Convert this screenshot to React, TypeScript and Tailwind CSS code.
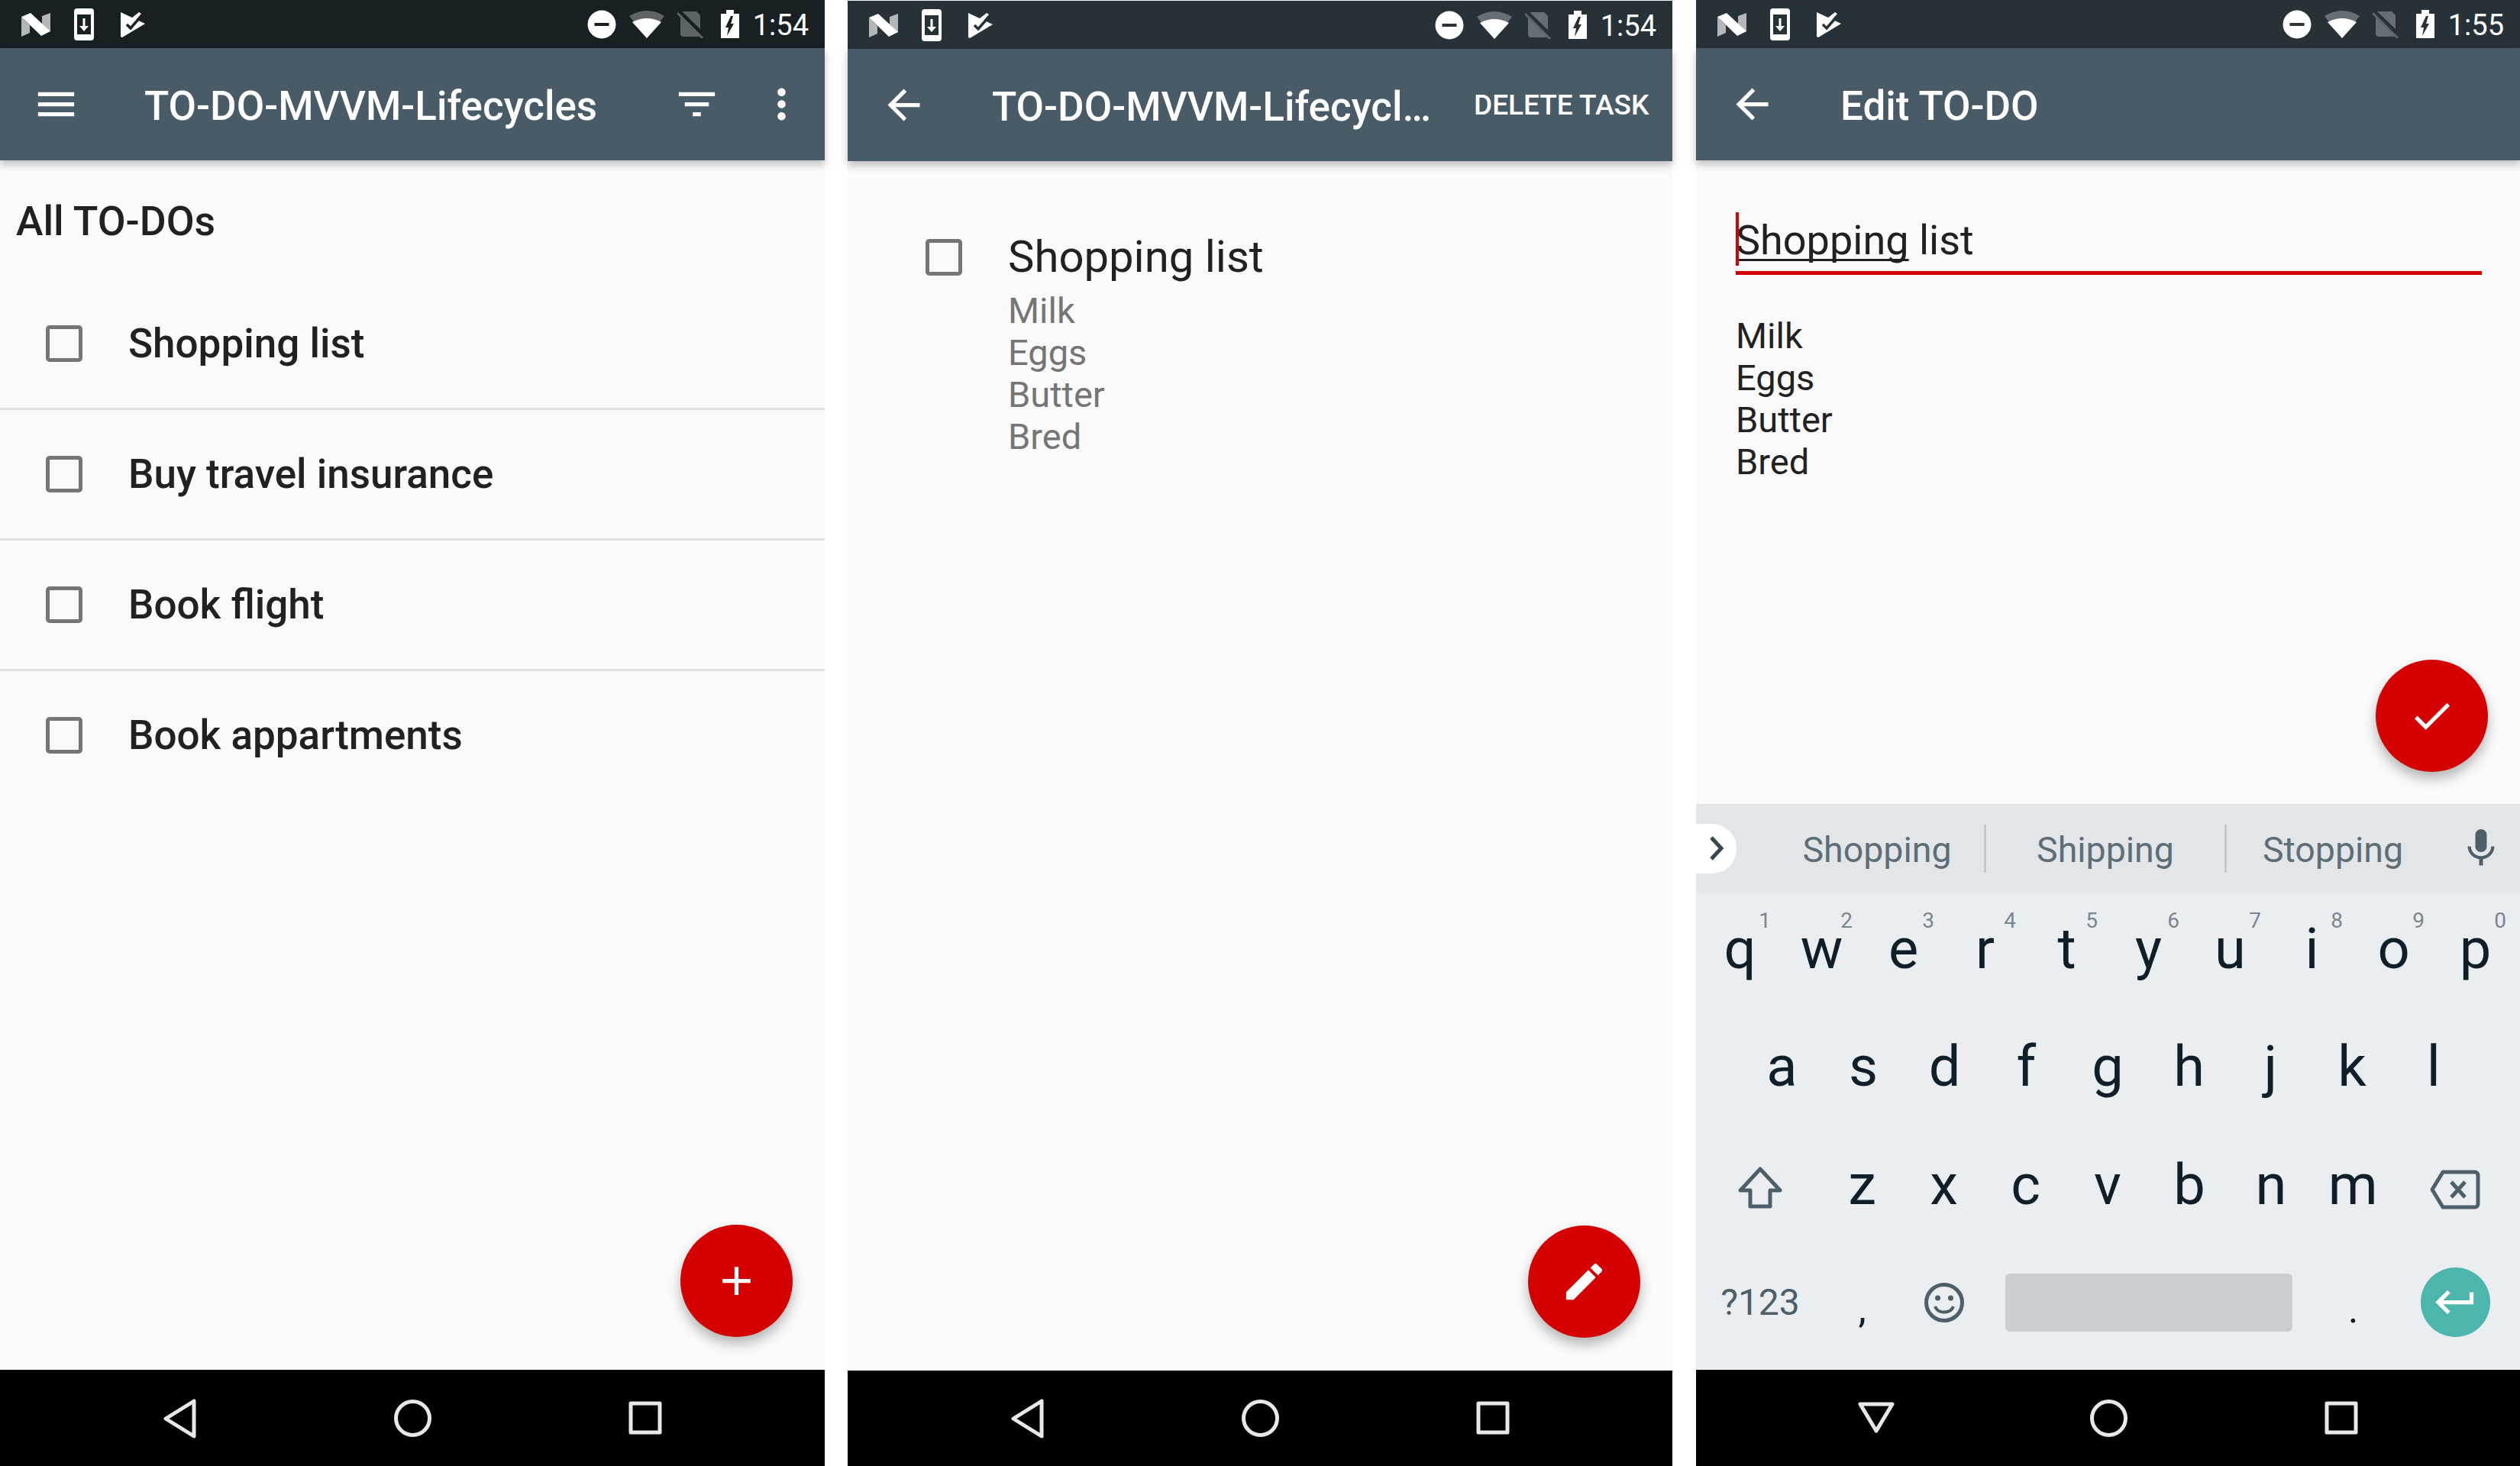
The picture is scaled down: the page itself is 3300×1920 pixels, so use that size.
import type { ReactNode } from 'react';

const MENU = 'M3 18h18v-2H3v2zm0-5h18v-2H3v2zm0-7v2h18V6H3z';
const FILTER = 'M10 18h4v-2h-4v2zM3 6v2h18V6H3zm3 7h12v-2H6v2z';
const MORE =
  'M12 8c1.1 0 2-.9 2-2s-.9-2-2-2-2 .9-2 2 .9 2 2 2zm0 2c-1.1 0-2 .9-2 2s.9 2 2 2 2-.9 2-2-.9-2-2-2zm0 6c-1.1 0-2 .9-2 2s.9 2 2 2 2-.9 2-2-.9-2-2-2z';
const BACK = 'M20 11H7.83l5.59-5.59L12 4l-8 8 8 8 1.41-1.41L7.83 13H20v-2z';
const ADD = 'M19 13h-6v6h-2v-6H5v-2h6V5h2v6h6v2z';
const EDIT =
  'M3 17.25V21h3.75L17.81 9.94l-3.75-3.75L3 17.25zM20.71 7.04c.39-.39.39-1.02 0-1.41l-2.34-2.34c-.39-.39-1.02-.39-1.41 0l-1.83 1.83 3.75 3.75 1.83-1.83z';
const DONE = 'M9 16.17L4.83 12l-1.42 1.41L9 19 21 7l-1.41-1.41z';
const MIC =
  'M12 14c1.66 0 2.99-1.34 2.99-3L15 5c0-1.66-1.34-3-3-3S9 3.34 9 5v6c0 1.66 1.34 3 3 3zm5.3-3c0 3-2.54 5.1-5.3 5.1S6.7 14 6.7 11H5c0 3.41 2.72 6.23 6 6.72V21h2v-3.28c3.28-.48 6-3.3 6-6.72h-1.7z';
const RETURN = 'M19 7v4H5.83l3.58-3.59L8 6l-6 6 6 6 1.41-1.41L5.83 13H21V7z';

const ROW_ONE = ['q', 'w', 'e', 'r', 't', 'y', 'u', 'i', 'o', 'p'];
const DIGITS = ['1', '2', '3', '4', '5', '6', '7', '8', '9', '0'];
const ROW_TWO = ['a', 's', 'd', 'f', 'g', 'h', 'j', 'k', 'l'];
const ROW_THREE = ['z', 'x', 'c', 'v', 'b', 'n', 'm'];
const TODOS = ['Shopping list', 'Buy travel insurance', 'Book flight', 'Book appartments'];
const DETAILS = ['Milk', 'Eggs', 'Butter', 'Bred'];

function MaterialIcon({ d, className = 'h-[63px] w-[63px] fill-white' }: { d: string; className?: string }) {
  return (
    <svg viewBox="0 0 24 24" className={`shrink-0 ${className}`}>
      <path d={d} />
    </svg>
  );
}

function StatusBar({ time, className }: { time: string; className: string }) {
  return (
    <div className={`flex h-[63px] shrink-0 items-center pl-[28px] pr-[21px] ${className}`}>
      <svg viewBox="0 0 38 32" className="h-[32px] w-[38px]">
        <polygon points="0,6 11,17 11,27 0,32" fill="#b4b6b7" />
        <polygon points="38,1 27,5 27,15 38,26" fill="#b4b6b7" />
        <polygon points="0,6 12,1 38,25 26,31" fill="#fff" />
      </svg>
      <svg viewBox="0 0 26 42" className="ml-[31px] h-[42px] w-[26px]">
        <rect width="26" height="42" rx="4" fill="#fff" />
        <rect x="4" y="8" width="18" height="26" fill="currentColor" />
        <path d="M11.5 13h3v10h-3zM7 23h12l-6 7z" fill="#fff" />
      </svg>
      <svg viewBox="0 0 32 34" className="ml-[35px] h-[34px] w-[32px]">
        <polygon points="0,1 32,16 2,34 0,33" fill="#fff" />
        <polyline points="8,17 13,22 26,7" fill="none" stroke="currentColor" strokeWidth="3.5" />
        <polygon points="15,8 24,1 27,3 19,12" fill="#fff" />
      </svg>
      <svg viewBox="0 0 38 38" className="ml-auto h-[38px] w-[38px]">
        <circle cx="19" cy="19" r="18.5" fill="#fff" />
        <rect x="9.5" y="17" width="19" height="4" fill="currentColor" />
      </svg>
      <svg viewBox="0 0 46 36" className="ml-[17px] h-[36px] w-[46px]">
        <path d="M0 7Q23 -7 46 7L23 36Z" fill="#fff" fillOpacity="0.3" />
        <path d="M4 15Q23 5 42 15L23 36Z" fill="#fff" />
      </svg>
      <svg viewBox="0 0 34 36" className="ml-[17px] h-[36px] w-[34px]">
        <path d="M4 1H25L30 6V30a4 4 0 0 1-4 4H8a4 4 0 0 1-4-4Z" fill="#fff" fillOpacity="0.3" />
        <line x1="0" y1="0" x2="34" y2="33" stroke="currentColor" strokeWidth="7" />
        <line x1="0" y1="3" x2="33" y2="36" stroke="#5f6568" strokeWidth="3" />
      </svg>
      <svg viewBox="0 0 24 37" className="ml-[23px] h-[37px] w-[24px]">
        <path d="M7 0H17V5H24V37H0V5H7Z" fill="#fff" />
        <polygon points="13,8 6,23 10,23 8,34 17,18 13,18 16,8" fill="currentColor" />
      </svg>
      <span className="ml-[18px] mt-[3px] text-[38px] font-normal leading-[43px] text-white">{time}</span>
    </div>
  );
}

function Toolbar({ icon, children }: { icon: string; children: ReactNode }) {
  return (
    <header className="relative z-10 flex h-[147px] shrink-0 items-center bg-[#485b67] pl-[42px] shadow-[0_5px_10px_rgba(0,0,0,0.25)]">
      <MaterialIcon d={icon} />
      {children}
    </header>
  );
}

function Title({ children, className = '' }: { children: ReactNode; className?: string }) {
  return (
    <h1 className={`ml-[84px] mt-[4px] whitespace-nowrap text-[53px] font-medium leading-[62px] text-white ${className}`}>
      {children}
    </h1>
  );
}

function Checkbox({ className = '' }: { className?: string }) {
  return <div className={`h-[48px] w-[48px] shrink-0 rounded-[5px] border-[5px] border-[#757575] ${className}`} />;
}

function Fab({ icon, className = 'bottom-[43px]' }: { icon: string; className?: string }) {
  return (
    <button className={`absolute right-[42px] flex h-[147px] w-[147px] items-center justify-center rounded-full bg-[#d50000] shadow-[0_9px_16px_rgba(0,0,0,0.28)] ${className}`}>
      <MaterialIcon d={icon} />
    </button>
  );
}

function NavBar({ down = false, className = 'h-[126px]' }: { down?: boolean; className?: string }) {
  return (
    <nav className={`flex shrink-0 items-center gap-[242px] bg-black pl-[204px] ${className}`}>
      <svg viewBox="0 0 63 63" className="h-[63px] w-[63px] fill-none stroke-[#e8e8e8] stroke-[5px]" strokeLinejoin="round">
        {down ? <polygon points="11,13 53,13 32,48" /> : <polygon points="50,9 50,55 13,32" />}
      </svg>
      <svg viewBox="0 0 63 63" className="h-[63px] w-[63px] fill-none stroke-[#e8e8e8] stroke-[5px]">
        <circle cx="31.5" cy="31.5" r="22" />
      </svg>
      <svg viewBox="0 0 63 63" className="h-[63px] w-[63px] fill-none stroke-[#e8e8e8] stroke-[5px]" strokeLinejoin="round">
        <rect x="12" y="12" width="38" height="38" />
      </svg>
    </nav>
  );
}

function ListScreen() {
  return (
    <section className="flex h-[1920px] w-[1080px] flex-col bg-[#fafafa]">
      <StatusBar time="1:54" className="bg-[#182024] text-[#182024]" />
      <Toolbar icon={MENU}>
        <Title>TO-DO-MVVM-Lifecycles</Title>
        <MaterialIcon d={FILTER} className="ml-auto h-[63px] w-[63px] fill-white" />
        <MaterialIcon d={MORE} className="ml-[48px] mr-[25px] h-[63px] w-[63px] fill-white" />
      </Toolbar>
      <main className="relative flex-1">
        <h2 className="mb-[45px] pl-[21px] pt-[49px] text-[53.5px] font-medium leading-[62px] text-[#212121]">All TO-DOs</h2>
        <ul>
          {TODOS.map((todo, i) => (
            <li
              key={todo}
              className={`flex h-[171px] items-center gap-[60px] border-b-[3px] pl-[60px] ${i < TODOS.length - 1 ? 'border-[#e0e0e0]' : 'border-transparent'}`}
            >
              <Checkbox />
              <span className="text-[53px] font-medium leading-[62px] text-[#212121]">{todo}</span>
            </li>
          ))}
        </ul>
        <Fab icon={ADD} />
      </main>
      <NavBar />
    </section>
  );
}

function DetailScreen() {
  return (
    <section className="flex h-[1920px] w-[1080px] flex-col bg-[#fafafa] pt-px">
      <StatusBar time="1:54" className="bg-[#263238] text-[#263238]" />
      <Toolbar icon={BACK}>
        <Title className="w-[572px]">TO-DO-MVVM-Lifecycl…</Title>
        <span className="ml-[59px] text-[37px] font-medium leading-[44px] text-white">DELETE TASK</span>
      </Toolbar>
      <main className="relative flex flex-1 items-start gap-[60px] pl-[102px] pt-[88px]">
        <Checkbox className="mt-[14px]" />
        <div>
          <h2 className="text-[58px] font-normal leading-[74px] text-[#212121]">Shopping list</h2>
          <div className="mt-[6px] text-[47px] leading-[55px] text-[#757575]">
            {DETAILS.map((line) => (
              <p key={line}>{line}</p>
            ))}
          </div>
        </div>
        <Fab icon={EDIT} />
      </main>
      <NavBar className="h-[125px]" />
    </section>
  );
}

function Keyboard() {
  const iconStroke = 'fill-none stroke-[#4e5f69] stroke-[5px]';
  return (
    <div className="shrink-0 bg-[#ebeef1]">
      <div className="flex h-[116px] items-center bg-[#e2e6e9]">
        <div className="flex h-[65px] w-[53px] items-center justify-center rounded-r-[32px] bg-white">
          <svg viewBox="0 0 20 32" className="h-[32px] w-[20px] fill-none stroke-[#37474f] stroke-[5px]">
            <polyline points="3,2 16,16 3,30" />
          </svg>
        </div>
        <div className="ml-[44px] flex h-[63px] w-[283px] items-center justify-center border-r-[3px] border-[#c2c8cc] pt-[3px] text-[46.5px] leading-[60px] text-[#5f6e76]">
          Shopping
        </div>
        <div className="flex h-[63px] w-[315px] items-center justify-center border-r-[3px] border-[#c2c8cc] pt-[3px] text-[46.5px] leading-[60px] text-[#5f6e76]">
          Shipping
        </div>
        <div className="flex h-[63px] w-[278px] items-center justify-center pt-[3px] text-[46.5px] leading-[60px] text-[#5f6e76]">
          Stopping
        </div>
        <MaterialIcon d={MIC} className="ml-[25px] h-[60px] w-[60px] fill-[#4e5f69]" />
      </div>
      <div className="grid h-[154px] grid-cols-10 pl-[4px] pr-[5px] pt-[31px] text-[74px] leading-[86px] text-[#0f1f2a]">
        {ROW_ONE.map((key, i) => (
          <span key={key} className="relative text-center">
            {key}
            <span className="absolute right-[13px] top-[-11px] text-[28px] leading-[33px] text-[#7a868d]">{DIGITS[i]}</span>
          </span>
        ))}
      </div>
      <div className="grid h-[155px] grid-cols-9 pl-[59px] pr-[60px] pt-[31px] text-[74px] leading-[86px] text-[#0f1f2a]">
        {ROW_TWO.map((key) => (
          <span key={key} className="text-center">
            {key}
          </span>
        ))}
      </div>
      <div className="flex h-[155px] pl-[4px] pt-[31px] text-[74px] leading-[86px] text-[#0f1f2a]">
        <div className="flex h-[86px] w-[160px] items-center justify-center pt-[6px]">
          <svg viewBox="0 0 58 56" className={`h-[56px] w-[58px] ${iconStroke}`} strokeLinejoin="round">
            <path d="M29 4L55 32H42V53H16V32H3Z" />
          </svg>
        </div>
        {ROW_THREE.map((key) => (
          <span key={key} className="w-[107.1px] text-center">
            {key}
          </span>
        ))}
        <div className="flex h-[86px] w-[160px] items-center justify-center pt-[12px]">
          <svg viewBox="0 0 66 52" className={`h-[52px] w-[66px] ${iconStroke}`} strokeLinejoin="round">
            <path d="M17 3H59a4 4 0 0 1 4 4V45a4 4 0 0 1-4 4H17L3 26Z" />
            <path d="M28 16L46 36M46 16L28 36" />
          </svg>
        </div>
      </div>
      <div className="flex h-[161px] items-center pb-[16px] pl-[4px]">
        <span className="w-[160px] text-center text-[48px] leading-[54px] text-[#4e5f69]">?123</span>
        <span className="mt-[18px] w-[107px] text-center text-[52px] leading-[60px] text-[#0f1f2a]">,</span>
        <div className="flex w-[108px] justify-center">
          <svg viewBox="0 0 54 54" className={`h-[54px] w-[54px] ${iconStroke}`}>
            <circle cx="27" cy="27" r="23.5" />
            <circle cx="18.5" cy="21" r="3.5" className="fill-[#4e5f69] stroke-0" />
            <circle cx="35.5" cy="21" r="3.5" className="fill-[#4e5f69] stroke-0" />
            <path d="M15 32C19 42 35 42 39 32" strokeWidth="4" />
          </svg>
        </div>
        <div className="ml-[26px] h-[76px] w-[376px] rounded-[6px] bg-[#c9ced1]" />
        <span className="ml-[26px] mt-[18px] w-[107px] text-center text-[52px] leading-[60px] text-[#0f1f2a]">.</span>
        <div className="flex w-[160px] justify-center">
          <div className="flex h-[91px] w-[91px] items-center justify-center rounded-full bg-[#4db6ac]">
            <MaterialIcon d={RETURN} className="h-[63px] w-[63px] fill-white" />
          </div>
        </div>
      </div>
    </div>
  );
}

function EditScreen() {
  return (
    <section className="ml-px flex h-[1920px] w-[1079px] flex-col bg-[#fafafa]">
      <StatusBar time="1:55" className="bg-[#263238] text-[#263238]" />
      <Toolbar icon={BACK}>
        <Title>Edit TO-DO</Title>
      </Toolbar>
      <main className="relative flex-1 pl-[52px] pr-[50px] pt-[71px]">
        <div className="relative border-b-[5px] border-[#d50000] pb-[6px] text-[54px] leading-[68px] text-[#212121]">
          <span className="absolute left-0 top-[-3px] h-[70px] w-[4px] bg-[#d50000]" />
          <span className="underline decoration-[3px] underline-offset-[6px] [text-decoration-skip-ink:none]">Shopping</span> list
        </div>
        <div className="mt-[52px] text-[47px] leading-[55px] text-[#212121]">
          {DETAILS.map((line) => (
            <p key={line}>{line}</p>
          ))}
        </div>
        <Fab icon={DONE} className="bottom-[42px]" />
      </main>
      <Keyboard />
      <NavBar down />
    </section>
  );
}

export default function App() {
  return (
    <div className="flex h-[1920px] w-[3300px] gap-[30px] bg-white font-['Roboto',sans-serif]">
      <ListScreen />
      <DetailScreen />
      <EditScreen />
    </div>
  );
}
